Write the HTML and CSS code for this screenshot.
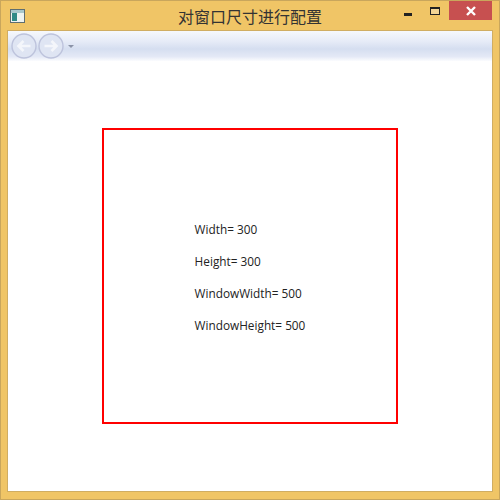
FILE: index.html
```html
<!DOCTYPE html>
<html lang="en">
<head>
    <meta charset="UTF-8">
    <title>对窗口尺寸进行配置</title>
    <link rel="stylesheet" href="styles.css">
</head>
<body>
    <div class="window">
        <header class="title-bar">
            <svg class="app-icon" width="15" height="14" viewBox="0 0 15 14">
                <rect x="0.5" y="0.5" width="14" height="13" fill="#eef3f1" stroke="#5e6e70"/>
                <rect x="1" y="1" width="13" height="3" fill="#a9c8cc"/>
                <rect x="2" y="4" width="5" height="8" fill="#2f8a86"/>
            </svg>
            <div class="title">对窗口尺寸进行配置</div>
            <div class="window-buttons">
                <div class="btn-min"></div>
                <div class="btn-max"></div>
                <div class="btn-close">
                    <svg width="10" height="10" viewBox="0 0 10 10">
                        <path d="M1 1L9 9M9 1L1 9" stroke="#fff" stroke-width="2.4"/>
                    </svg>
                </div>
            </div>
        </header>
        <div class="content">
            <div class="nav-bar">
                <svg class="nav-icon" width="28" height="28" viewBox="0 0 28 28">
                    <circle cx="14" cy="14" r="12" fill="#dfe5f3" stroke="#bdc3dc" stroke-width="1.4"/>
                    <path d="M20.5 14H9M13.5 9L8.5 14L13.5 19" fill="none" stroke="#f4f6fb" stroke-width="2.6"/>
                </svg>
                <svg class="nav-icon overlap" width="28" height="28" viewBox="0 0 28 28">
                    <circle cx="14" cy="14" r="12" fill="#dfe5f3" stroke="#bdc3dc" stroke-width="1.4"/>
                    <path d="M7.5 14H19M14.5 9L19.5 14L14.5 19" fill="none" stroke="#f4f6fb" stroke-width="2.6"/>
                </svg>
                <div class="nav-arrow"></div>
            </div>
            <main class="page">
                <div class="box">
                    <div class="stack">
                        <div>Width= 300</div>
                        <div>Height= 300</div>
                        <div>WindowWidth= 500</div>
                        <div>WindowHeight= 500</div>
                    </div>
                </div>
            </main>
        </div>
    </div>
</body>
</html>
```

FILE: styles.css
```css
* { margin: 0; padding: 0; box-sizing: border-box; }
body { width: 500px; height: 500px; overflow: hidden; font-family: "Open Sans", "Noto Sans CJK SC", sans-serif; }
.window { width: 500px; height: 500px; display: flex; flex-direction: column; background-color: #f0c566; border: 1px solid #c9a65c; padding: 0 6px 7px; }
.title-bar { height: 29px; display: grid; grid-template-columns: 1fr auto 1fr; align-items: center; flex-shrink: 0; }
.app-icon { margin-left: 3px; margin-top: 1px; }
.title { font-size: 16px; color: #333; font-family: "Noto Sans CJK SC", sans-serif; }
.window-buttons { display: flex; align-items: flex-start; align-self: start; justify-self: end; }
.btn-min { width: 8px; height: 3px; background-color: #222; margin: 12px 18px 0 0; }
.btn-max { width: 10px; height: 8px; border: 1px solid #222; border-top-width: 2px; margin: 6px 9px 0 0; background-color: #f3d594; }
.btn-close { width: 43px; height: 19px; background-color: #c75050; display: flex; align-items: center; justify-content: center; margin-right: 1px; }
.content { flex: 1; display: flex; flex-direction: column; background-color: #fff; border: 1px solid #d0ad62; min-height: 0; }
.nav-bar { height: 30px; padding-left: 2px; display: flex; align-items: center; flex-shrink: 0; background: linear-gradient(#f6f8fc 0%, #e6ebf7 35%, #d5def0 60%, #e4e9f6 85%, #fbfcfe 100%); }
.nav-icon { flex-shrink: 0; }
.overlap { margin-left: -1px; }
.nav-arrow { width: 0; height: 0; border-left: 3px solid transparent; border-right: 3px solid transparent; border-top: 3px solid #8b93a8; margin-left: 3px; }
.page { flex: 1; display: flex; align-items: center; justify-content: center; }
.box { width: 296px; height: 296px; border: 2px solid #f00; display: flex; align-items: center; justify-content: center; }
.stack { display: flex; flex-direction: column; gap: 16px; padding-top: 2px; font-size: 11.8px; line-height: 16px; color: #222; }
```
